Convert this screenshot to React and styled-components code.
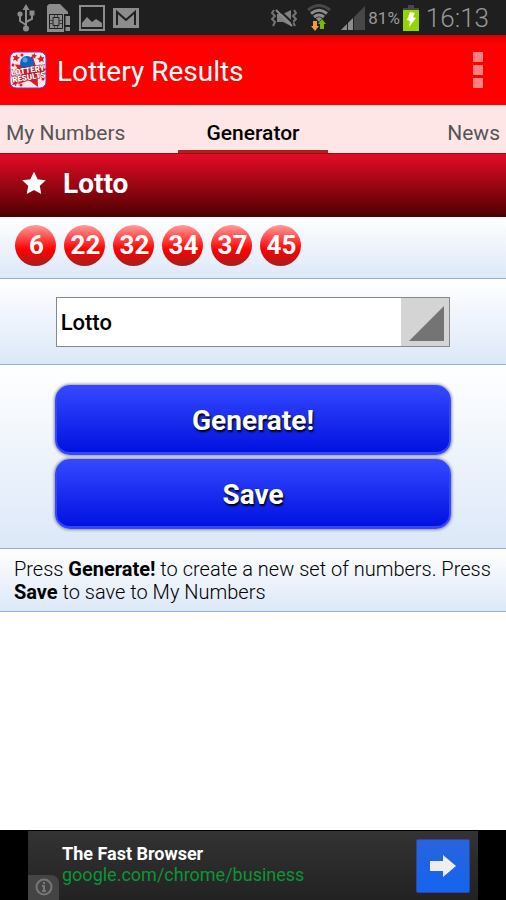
import styled, { createGlobalStyle } from "styled-components";

const balls = [6, 22, 32, 34, 37, 45];

const App = () => {
  return (
    <Screen>
      <GlobalStyle />

      <StatusBar>
        <StatusGroup $gap="8px">
          <UsbIcon />
          <SimIcon />
          <PictureIcon />
          <MailIcon />
        </StatusGroup>

        <StatusGroup $gap="3px">
          <StatusGroup $gap="10px">
            <MuteIcon />
            <WifiIcon />
            <SignalIcon />
          </StatusGroup>
          <Percent>81%</Percent>
          <BatteryIcon />
          <Clock>16:13</Clock>
        </StatusGroup>
      </StatusBar>

      <AppBar>
        <Logo />
        <AppTitle>Lottery Results</AppTitle>
        <MenuButton aria-label="Menu">
          <MenuDot />
          <MenuDot />
          <MenuDot />
        </MenuButton>
      </AppBar>

      <Tabs>
        <Tab href="#numbers">My Numbers</Tab>
        <Tab href="#generator" $active>
          Generator
        </Tab>
        <Tab href="#news">News</Tab>
      </Tabs>

      <main>
        <GameHeader>
          <StarIcon />
          <GameTitle>Lotto</GameTitle>
        </GameHeader>

        <BallRow>
          {balls.map((ball) => (
            <Ball key={ball}>{ball}</Ball>
          ))}
        </BallRow>

        <SelectRow>
          <SelectWrap>
            <GameSelect aria-label="Game" defaultValue="lotto">
              <option value="lotto">Lotto</option>
            </GameSelect>
            <SelectCorner>
              <svg width="35" height="35" viewBox="0 0 35 35">
                <path d="M35 0V35H0Z" fill="#747474" />
              </svg>
            </SelectCorner>
          </SelectWrap>
        </SelectRow>

        <ButtonRow>
          <ActionButton type="button">Generate!</ActionButton>
          <ActionButton type="button">Save</ActionButton>
        </ButtonRow>

        <Help>
          Press <b>Generate!</b> to create a new set of numbers. Press{" "}
          <b>Save</b> to save to My Numbers
        </Help>
      </main>

      <AdBar>
        <Ad>
          <AdInfo>
            <InfoIcon />
          </AdInfo>
          <AdText>
            <AdTitle>The Fast Browser</AdTitle>
            <AdLink href="#ad">google.com/chrome/business</AdLink>
          </AdText>
          <AdButton aria-label="Open">
            <svg width="26" height="24" viewBox="0 0 26 24">
              <path d="M0 7H13V1L26 12L13 23V17H0Z" fill="#eee" />
            </svg>
          </AdButton>
        </Ad>
      </AdBar>
    </Screen>
  );
};

const UsbIcon = () => (
  <svg width="20" height="28" viewBox="0 0 20 28">
    <g fill="none" stroke="#8c8c8c" strokeWidth="2">
      <path d="M9 4V24M9 21L3 17V11M9 18L15 15V9" />
    </g>
    <g fill="#8c8c8c">
      <path d="M9 0L12.500 6H5.500Z" />
      <circle cx="3" cy="10" r="2.600" />
      <path d="M12.500 6.500H17.500V11.500H12.500Z" />
      <circle cx="9" cy="24.500" r="3" />
    </g>
  </svg>
);

const SimIcon = () => (
  <svg width="26" height="28" viewBox="0 0 26 28">
    <path d="M2 2L4 0H15L23 8V10H19V28H2Z" fill="#8c8c8c" />
    <path
      d="M4.500 10.500H17.500V24.500H4.500ZM8 13.500H14V21.500H8Z"
      stroke="#1f1f1f"
      strokeWidth="1"
      fill="none"
    />
    <path
      d="M9.500 11V13M12.500 11V13M9.500 22V24M12.500 22V24M5 16.500H8M5 19.500H8M14 16.500H17M14 19.500H17"
      stroke="#444"
      strokeWidth="1"
      fill="none"
    />
    <path d="M20.500 12H25V21H20.500ZM20.500 23H25V27H20.500Z" fill="#8c8c8c" />
  </svg>
);

const PictureIcon = () => (
  <svg width="26" height="26" viewBox="0 0 26 26">
    <path d="M1 1H25V25H1Z" fill="none" stroke="#8c8c8c" strokeWidth="2" />
    <path
      d="M3 22V18L8 12L13 17L17 14L20 16L23 18V22Z"
      fill="#8c8c8c"
    />
  </svg>
);

const MailIcon = () => (
  <svg width="26" height="20" viewBox="0 0 26 20">
    <path d="M0 0H26V20H0Z" fill="#8c8c8c" />
    <path
      d="M4 17V4L13 12L22 4V17"
      fill="none"
      stroke="#1f1f1f"
      strokeWidth="2"
    />
  </svg>
);

const MuteIcon = () => (
  <svg width="26" height="18" viewBox="0 0 26 18">
    <path d="M6 5H12L20 1V17L12 13H6Z" fill="#808080" />
    <path
      d="M3 1L1 4L4 7L1 10L4 13L2 17M23 1L25 4L22 7L25 10L22 13L24 17"
      fill="none"
      stroke="#747474"
      strokeWidth="2"
    />
    <path d="M7 0L22 14" stroke="#1f1f1f" strokeWidth="2" />
    <path d="M5 1L21 17" stroke="#8c8c8c" strokeWidth="2" />
  </svg>
);

const WifiIcon = () => (
  <svg width="24" height="28" viewBox="0 0 24 28">
    <g fill="none" strokeWidth="3">
      <path d="M1 6Q12 -3 23 6" stroke="#474747" />
      <path d="M4 9.500Q12 3 20 9.500" stroke="#8c8c8c" />
      <path d="M7 13Q12 9 17 13" stroke="#8c8c8c" />
    </g>
    <path d="M9 14.500Q12 12 15 14.500L12 18Z" fill="#8c8c8c" />
    <path d="M6 17H10V22H12L8 27L4 22H6Z" fill="#f59b32" />
    <path d="M13 25V20H11L15 15L19 20H17V25Z" fill="#79b800" />
  </svg>
);

const SignalIcon = () => (
  <svg width="24" height="24" viewBox="0 0 24 24">
    <path d="M24 0V24H0Z" fill="#474747" />
    <path d="M12 12V24H0Z" fill="#8c8c8c" />
    <path d="M6.500 16V24M12.500 8V24" stroke="#1f1f1f" strokeWidth="1" />
  </svg>
);

const BatteryIcon = () => (
  <svg width="16" height="26" viewBox="0 0 16 26">
    <path d="M5 0H11V3H16V5H0V3H5Z" fill="#474747" />
    <path d="M0 5H16V26H0Z" fill="#93d500" />
    <path d="M7 7L12 8L10 12L13 13L6 22L7 16L4 15Z" fill="#fff" />
  </svg>
);

const starShape =
  "M0 -10L3 -3.800L9.500 -3.100L4.700 1.500L5.900 8.100L0 4.900L-5.900 8.100L-4.700 1.500L-9.500 -3.100L-3 -3.800Z";

const StarIcon = () => (
  <svg width="24" height="24" viewBox="-12 -12 24 24">
    <path
      d={starShape}
      fill="#fff"
      stroke="#fff"
      strokeWidth="2"
      strokeLinejoin="miter"
    />
  </svg>
);

const Logo = () => (
  <svg width="38" height="38" viewBox="0 0 38 38" aria-hidden="true">
    <rect x="1" y="1" width="36" height="36" rx="6" fill="#fbe9ea" stroke="#6d3bd0" />
    <g fill="#dc1a28">
      <path d={starShape} transform="translate(21 21) rotate(8) scale(1.700)" />
      <path d={starShape} transform="translate(7 7) rotate(15) scale(.4)" />
      <path d={starShape} transform="translate(25 5) rotate(10) scale(.3)" />
      <path d={starShape} transform="translate(32 8) rotate(-10) scale(.4)" />
      <path d={starShape} transform="translate(6 32) rotate(20) scale(.35)" />
      <circle cx="13" cy="4" r="1.500" />
      <circle cx="4" cy="14" r="1.500" />
      <circle cx="12" cy="34" r="1.500" />
      <circle cx="34" cy="28" r="1.500" />
      <circle cx="4" cy="25" r="1.500" />
    </g>
    <circle cx="18" cy="12" r="7" fill="#1263bd" />
    <circle cx="16" cy="9" r="2.500" fill="#49a5ef" />
    <LogoText x="19" y="22" transform="rotate(-9 19 20)">
      LOTTERY
    </LogoText>
    <LogoText x="20" y="29" transform="rotate(-9 19 27)">
      RESULTS
    </LogoText>
  </svg>
);

const InfoIcon = () => (
  <svg width="18" height="18" viewBox="0 0 18 18">
    <circle cx="9" cy="9" r="7.500" fill="none" stroke="#777" strokeWidth="2" />
    <path d="M9 4V6M7 8H9V13M7 13H11" fill="none" stroke="#777" strokeWidth="2" />
  </svg>
);

const GlobalStyle = createGlobalStyle`
  * {
    box-sizing: border-box;
  }

  body {
    margin: 0;
    background: #fff;
    color: #000;
    font-family: Roboto, "Liberation Sans", sans-serif;
  }
`;

const Screen = styled.div`
  min-height: 100vh;
  display: flex;
  flex-direction: column;

  main {
    flex: 1;
  }

  svg {
    display: block;
    flex-shrink: 0;
  }
`;

const StatusBar = styled.div`
  height: 35px;
  padding: 0 17px;
  display: flex;
  align-items: center;
  justify-content: space-between;
  background: #1f1f1f;
  color: #999;
`;

const StatusGroup = styled.div`
  display: flex;
  align-items: center;
  gap: ${({ $gap }) => $gap};
`;

const Percent = styled.span`
  font-size: 17px;
`;

const Clock = styled.span`
  margin-left: 4px;
  font-size: 26px;
  font-weight: 300;
`;

const AppBar = styled.header`
  height: 70px;
  padding: 0 16px 0 9px;
  display: flex;
  align-items: center;
  background: linear-gradient(#d80000, #f00 8px);
`;

const LogoText = styled.text`
  fill: #fff;
  stroke: #a3101c;
  stroke-width: 1px;
  paint-order: stroke;
  font-size: 8px;
  font-weight: 900;
  text-anchor: middle;
`;

const AppTitle = styled.h1`
  flex: 1;
  margin: 0 0 0 10px;
  padding-top: 3px;
  color: #fff;
  font-size: 28px;
  font-weight: 400;
`;

const MenuButton = styled.button`
  display: grid;
  gap: 3px;
  padding: 7px;
  border: none;
  background: none;
  cursor: pointer;
`;

const MenuDot = styled.span`
  width: 10px;
  height: 10px;
  background: #ff8080;
`;

const Tabs = styled.nav`
  height: 49px;
  display: grid;
  grid-template-columns: 1fr auto 1fr;
  border-bottom: 1px solid #a8080c;
  background: #ffe6e6;
`;

const Tab = styled.a`
  padding: ${({ $active }) => ($active ? "8px 29px 0" : "8px 6px 0")};
  box-shadow: ${({ $active }) => ($active ? "inset 0 -3px #ab2020" : "none")};
  color: ${({ $active }) => ($active ? "#000" : "#555")};
  font-size: 21px;
  font-weight: ${({ $active }) => ($active ? 500 : 400)};
  line-height: 40px;
  text-decoration: none;
  white-space: nowrap;

  &:last-child {
    text-align: right;
  }
`;

const GameHeader = styled.header`
  height: 63px;
  padding: 0 22px 4px;
  display: flex;
  align-items: center;
  gap: 17px;
  background: linear-gradient(#e50b27, #4c0000);
`;

const GameTitle = styled.h2`
  margin: 0;
  color: #fff;
  font-size: 28px;
  font-weight: 700;
`;

const Row = styled.section`
  border-bottom: 1px solid #8ab0ee;
  background: linear-gradient(#fff, #dce8f8);
`;

const BallRow = styled(Row)`
  display: flex;
  gap: 8px;
  padding: 8px 15px 12px;
`;

const Ball = styled.span`
  width: 41px;
  height: 41px;
  padding-left: 2px;
  border-radius: 50%;
  background: linear-gradient(#ff9c9c, #f00 60%, #a02020);
  color: #fff;
  font-size: 26px;
  font-weight: 700;
  line-height: 41px;
  text-align: center;
`;

const SelectRow = styled(Row)`
  padding: 18px 11% 17px;
`;

const SelectWrap = styled.div`
  position: relative;
`;

const GameSelect = styled.select`
  display: block;
  width: 100%;
  height: 50px;
  padding: 0 52px 0 4px;
  border: 1px solid #888;
  border-radius: 0;
  appearance: none;
  background: #fff;
  color: #000;
  font-family: inherit;
  font-size: 22px;
  font-weight: 500;
`;

const SelectCorner = styled.span`
  position: absolute;
  top: 1px;
  right: 1px;
  bottom: 1px;
  width: 48px;
  padding: 8px 5px 5px 8px;
  background: #d4d4d4;
  pointer-events: none;
`;

const ButtonRow = styled(Row)`
  display: grid;
  gap: 4px;
  padding: 20px 55px 19px;
`;

const ActionButton = styled.button`
  height: 70px;
  padding: 2px 6px 0;
  border: solid #3446ff;
  border-width: 1px 2px 3px;
  border-radius: 15px;
  background: linear-gradient(#3548ff, #0012e0);
  box-shadow: 0 0 3px 1px rgba(0, 0, 0, 0.4);
  color: #fff;
  font-family: inherit;
  font-size: 28px;
  font-weight: 700;
  text-shadow: 1px 2px 2px #000;
  cursor: pointer;
`;

const Help = styled(Row).attrs({ as: "p" })`
  margin: 0;
  padding: 9px 8px 7px 14px;
  font-size: 20px;
  font-weight: 300;
  line-height: 23px;

  b {
    font-weight: 700;
  }
`;

const AdBar = styled.aside`
  padding: 0 28px;
  border-top: 1px solid #000;
  background: #000;
`;

const Ad = styled.div`
  position: relative;
  height: 69px;
  padding: 0 8px 0 34px;
  display: flex;
  align-items: center;
  justify-content: space-between;
  background: linear-gradient(#333, #222);
`;

const AdInfo = styled.span`
  position: absolute;
  left: 0;
  bottom: 0;
  padding: 3px 6px 4px 7px;
  border-top-right-radius: 8px;
  background: #444;
`;

const AdText = styled.div`
  display: grid;
  padding-bottom: 3px;
  line-height: 21px;
`;

const AdTitle = styled.strong`
  color: #fff;
  font-size: 18px;
`;

const AdLink = styled.a`
  color: #0a9632;
  font-size: 18px;
  text-decoration: none;
`;

const AdButton = styled.button`
  width: 54px;
  height: 54px;
  display: grid;
  place-items: center;
  padding: 0;
  border: 1px solid #3344a0;
  border-radius: 2px;
  background: linear-gradient(#2864dc, #1464f0);
  cursor: pointer;
`;

export default App;
